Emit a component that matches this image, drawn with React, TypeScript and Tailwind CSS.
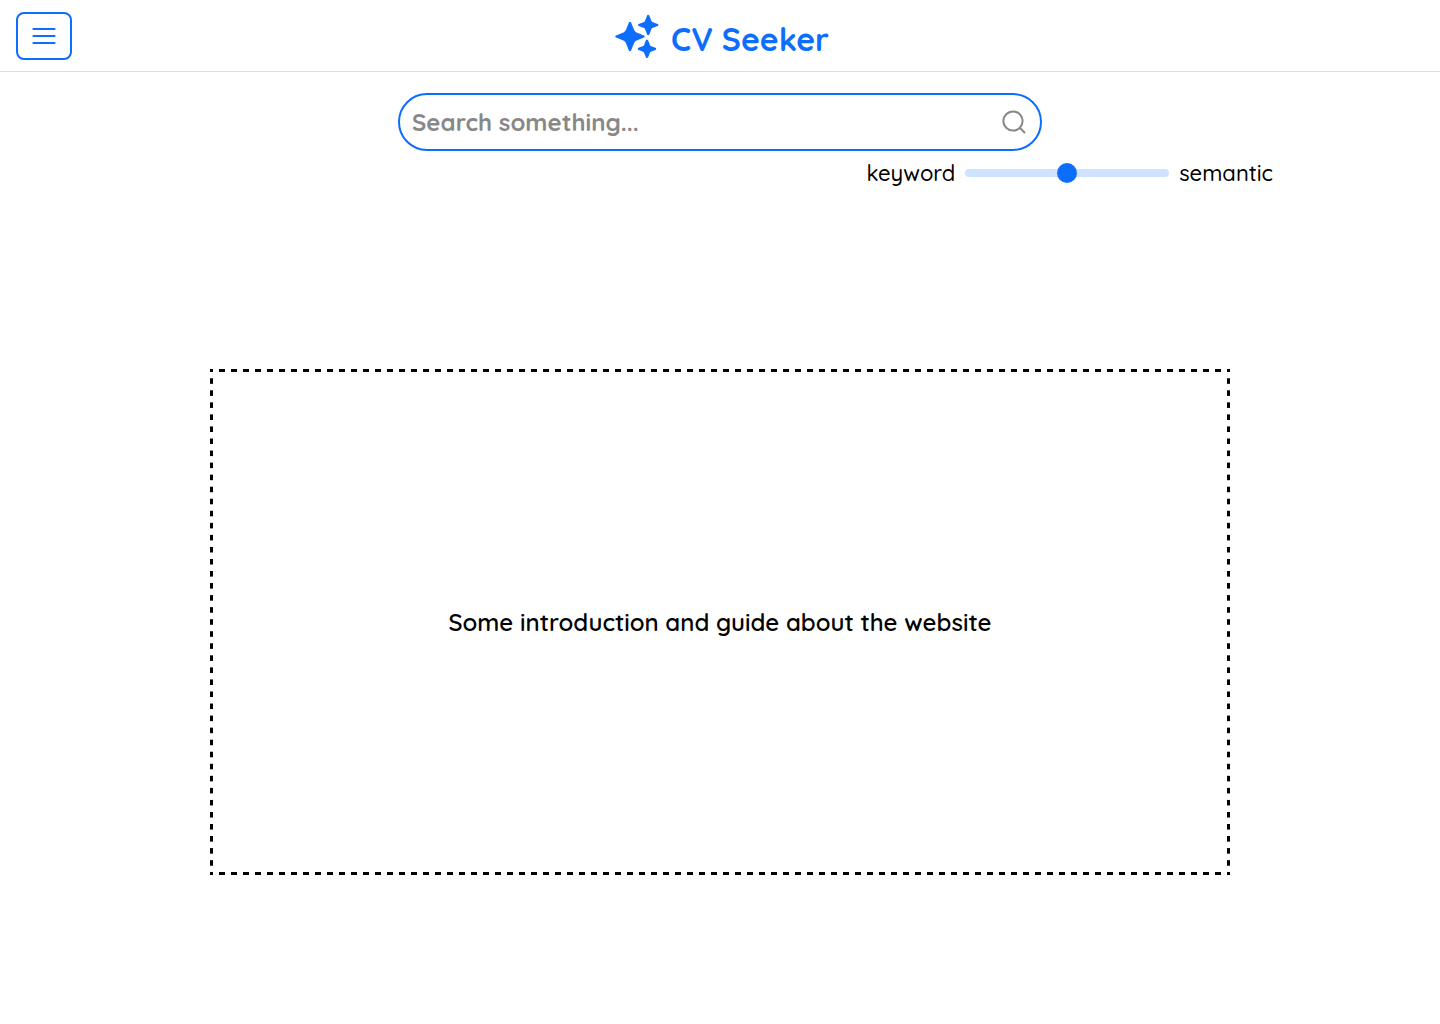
import { useState } from "react";

function SparklesIcon() {
  return (
    <svg viewBox="0 0 48 48" className="size-12" fill="#0d6efd" stroke="#0d6efd" strokeWidth="2.4" strokeLinejoin="round" aria-hidden="true">
      <path d="M19 11L22.2 18.9Q23 20.5 24.6 21.3L32.5 24.5L24.6 27.7Q23 28.5 22.2 30.1L19 38L15.8 30.1Q15 28.5 13.4 27.7L5.5 24.5L13.4 21.3Q15 20.5 15.8 18.9Z" />
      <path d="M37.2 4L39.2 9.2Q39.7 10.5 41 11L46.2 13L41 15Q39.7 15.5 39.2 16.8L37.2 22L35.2 16.8Q34.7 15.5 33.4 15L28.2 13L33.4 11Q34.7 10.5 35.2 9.2Z" />
      <path d="M36 28.8L37.8 33.4Q38.3 34.5 39.4 35L44 36.8L39.4 38.6Q38.3 39.1 37.8 40.2L36 44.8L34.2 40.2Q33.7 39.1 32.6 38.6L28 36.8L32.6 35Q33.7 34.5 34.2 33.4Z" />
    </svg>
  );
}

export default function App() {
  const [query, setQuery] = useState("");
  const [balance, setBalance] = useState(50);

  return (
    <div className="flex min-h-screen flex-col bg-white font-[Quicksand,Lato,sans-serif] text-black">
      <header className="grid h-18 grid-cols-[1fr_auto_1fr] items-center border-b border-[#dedede] px-4">
        <button
          type="button"
          aria-label="Open menu"
          className="flex h-12 w-14 items-center justify-center rounded-lg border-2 border-[#0d6efd] text-[#0d6efd]"
        >
          <svg viewBox="0 0 24 24" className="size-6" fill="none" stroke="currentColor" strokeWidth="2.2" strokeLinecap="round" aria-hidden="true">
            <path d="M1.5 5H22.5M1.5 12H22.5M1.5 19H22.5" />
          </svg>
        </button>
        <a href="#" className="flex items-center gap-3 text-[#0d6efd]">
          <SparklesIcon />
          <h1 className="pt-1.5 text-[32px] leading-10 font-bold">CV Seeker</h1>
        </a>
      </header>

      <main className="flex flex-1 flex-col px-6">
        <form
          className="mx-auto mt-[21px] flex h-[58px] w-full max-w-[644px] items-center rounded-full border-2 border-[#0d6efd] px-3"
          onSubmit={(event) => event.preventDefault()}
        >
          <input
            type="text"
            aria-label="Search"
            placeholder="Search something..."
            value={query}
            onChange={(event) => setQuery(event.target.value)}
            className="min-w-0 flex-1 text-2xl font-bold outline-none placeholder:text-[#888888]"
          />
          <button type="submit" aria-label="Submit search" className="text-[#888888]">
            <svg viewBox="0 0 28 28" className="size-7" fill="none" stroke="currentColor" strokeWidth="2" strokeLinecap="round" aria-hidden="true">
              <circle cx="13" cy="13" r="9.6" />
              <path d="M20 20L24.5 24.5" />
            </svg>
          </button>
        </form>

        <div className="mx-auto mt-2 flex w-full max-w-[1106px] items-center justify-end gap-2.5 text-[22px] leading-7 font-medium">
          <label htmlFor="balance">keyword</label>
          <input
            id="balance"
            type="range"
            min={0}
            max={100}
            value={balance}
            onChange={(event) => setBalance(Number(event.target.value))}
            className="h-2 w-51 appearance-none rounded-full bg-[#cfe2ff] [&::-moz-range-thumb]:size-5 [&::-moz-range-thumb]:border-0 [&::-moz-range-thumb]:bg-[#0d6efd] [&::-webkit-slider-thumb]:size-5 [&::-webkit-slider-thumb]:appearance-none [&::-webkit-slider-thumb]:rounded-full [&::-webkit-slider-thumb]:bg-[#0d6efd]"
          />
          <label htmlFor="balance">semantic</label>
        </div>

        <div className="flex flex-1 items-center justify-center pt-8">
          <section className="flex min-h-[506px] w-full max-w-[1020px] items-center justify-center bg-[linear-gradient(90deg,black_25%,transparent_25%_75%,black_75%),linear-gradient(90deg,black_25%,transparent_25%_75%,black_75%),linear-gradient(black_25%,transparent_25%_75%,black_75%),linear-gradient(black_25%,transparent_25%_75%,black_75%)] [background-position:left_top,left_bottom,left_top,right_top] [background-repeat:round_no-repeat,round_no-repeat,no-repeat_round,no-repeat_round] [background-size:12px_3px,12px_3px,3px_12px,3px_12px]">
            <p className="text-2xl font-semibold">Some introduction and guide about the website</p>
          </section>
        </div>
      </main>
    </div>
  );
}
